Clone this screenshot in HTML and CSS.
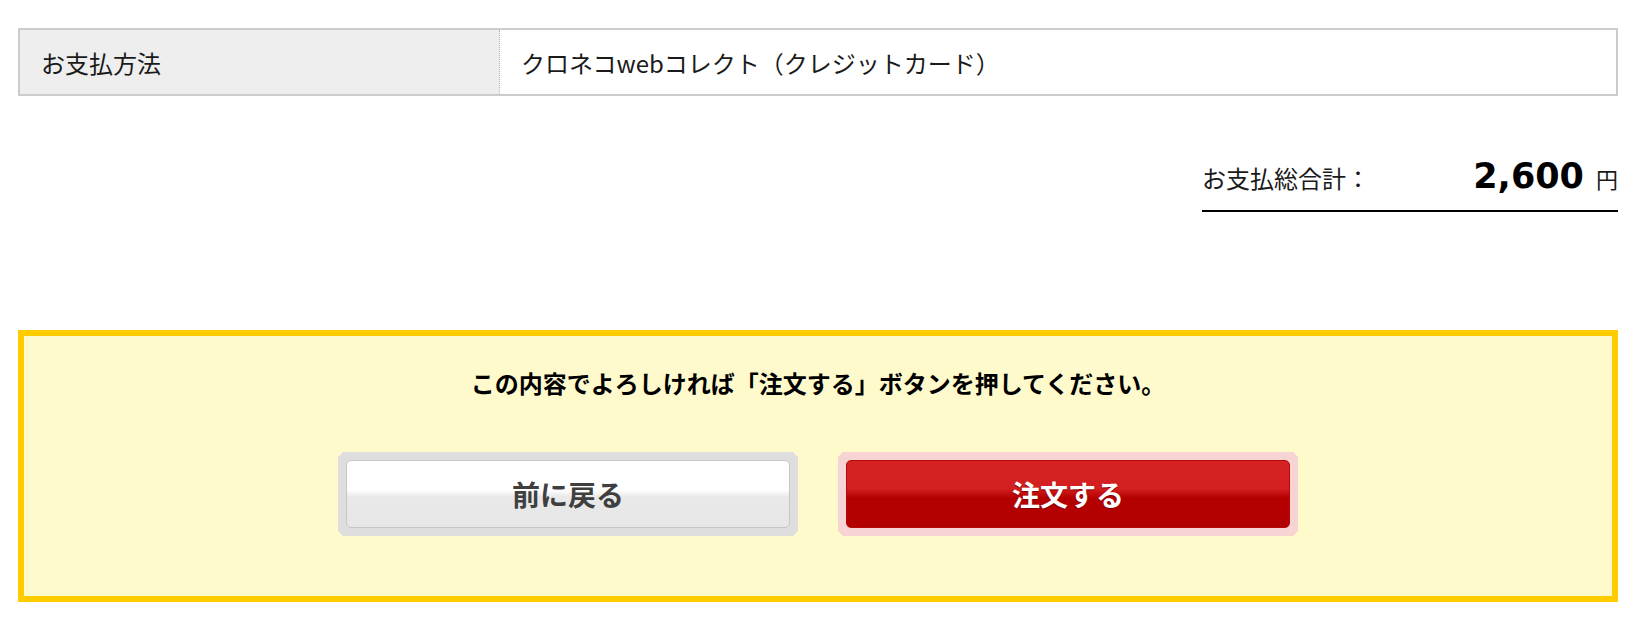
FILE: index.html
```html
<!DOCTYPE html>
<html lang="ja">
<head>
  <meta charset="UTF-8">
  <title>ご注文内容の確認</title>
  <link rel="stylesheet" href="styles.css">
</head>
<body>
  <div class="page">
    <table class="pay-table">
      <tr>
        <th>お支払方法</th>
        <td>クロネコwebコレクト（クレジットカード）</td>
      </tr>
    </table>

    <div class="total">
      <span class="total-label">お支払総合計：</span>
      <span class="total-price">2,600</span>
      <span class="total-yen">円</span>
    </div>

    <div class="confirm">
      <p class="confirm-msg">この内容でよろしければ「注文する」ボタンを押してください。</p>
      <div class="confirm-btns">
        <span class="btn-frame back">
          <button class="btn" type="button">前に戻る</button>
        </span>
        <span class="btn-frame order">
          <button class="btn" type="submit">注文する</button>
        </span>
      </div>
    </div>
  </div>
</body>
</html>
```

FILE: styles.css
```css
* {
  box-sizing: border-box;
}
body {
  margin: 0;
  background: #fff;
  color: #1a1a1a;
  font-family: 'Noto Sans CJK JP', 'Noto Sans', sans-serif;
}
.page {
  width: 1600px;
  margin: 0 auto;
  padding-top: 28px;
}

/* お支払方法 */
.pay-table {
  width: 100%;
  border: 2px solid #ccc;
  border-collapse: separate;
  border-spacing: 0;
  font-size: 24px;
}
.pay-table th,
.pay-table td {
  height: 64px;
  padding: 0 21px;
  text-align: left;
  vertical-align: middle;
  font-weight: normal;
}
.pay-table th {
  width: 480px;
  background: #eee;
  border-right: 1px dotted #bbb;
}

/* 合計 */
.total {
  display: flex;
  align-items: baseline;
  width: 416px;
  margin: 63px 0 0 auto;
  padding-bottom: 15px;
  border-bottom: 2px solid #000;
  line-height: 34px;
}
.total-label {
  font-size: 24px;
  color: #1a1a1a;
}
.total-price {
  margin-left: auto;
  font-family: 'DejaVu Sans', Verdana, sans-serif;
  font-size: 35px;
  font-weight: bold;
  color: #000;
}
.total-yen {
  margin-left: 12px;
  font-size: 22px;
}

/* 確認ボックス */
.confirm {
  margin-top: 118px;
  border: 6px solid #ffcc00;
  background: #fefacc;
  padding: 30px 0 60px;
}
.confirm-msg {
  margin: 0;
  text-align: center;
  font-size: 24px;
  font-weight: bold;
  line-height: 34px;
  color: #000;
}
.confirm-btns {
  display: flex;
  justify-content: center;
  gap: 40px;
  margin-top: 52px;
}
.btn-frame {
  display: block;
  width: 460px;
  height: 84px;
  padding: 8px;
  clip-path: polygon(5px 0, calc(100% - 5px) 0, 100% 5px, 100% calc(100% - 5px), calc(100% - 5px) 100%, 5px 100%, 0 calc(100% - 5px), 0 5px);
}
.btn {
  display: block;
  width: 100%;
  height: 100%;
  border-radius: 5px;
  font-family: 'Noto Sans CJK JP', sans-serif;
  font-size: 28px;
  font-weight: bold;
  cursor: pointer;
}
.back {
  background: #dedede;
}
.back .btn {
  border: 1px solid #c6c6c6;
  background: linear-gradient(#fff 0, #fff 44%, #e9e9e9 54%, #e6e6e6 100%);
  color: #3f3f3f;
}
.order {
  background: #f7d3d3;
}
.order .btn {
  border: 1px solid #b30a0a;
  background: linear-gradient(#d62222 0, #d31f1f 42%, #b50000 56%, #b30000 100%);
  color: #fff;
  text-shadow: 0 1px 1px #7a0000;
}
```
